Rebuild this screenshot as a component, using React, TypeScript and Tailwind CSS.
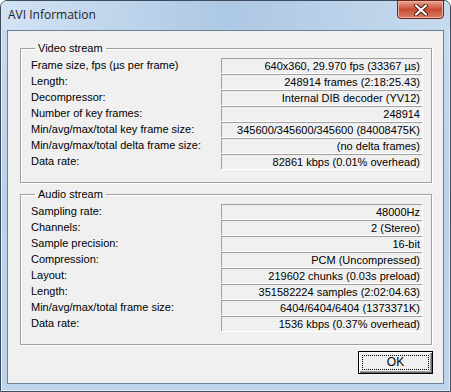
/**
 * AVI Information dialog — classic Win32 property box inside an Aero frame.
 */
const videoRows: [string, string][] = [
  ["Frame size, fps (µs per frame)", "640x360, 29.970 fps (33367 µs)"],
  ["Length:", "248914 frames (2:18:25.43)"],
  ["Decompressor:", "Internal DIB decoder (YV12)"],
  ["Number of key frames:", "248914"],
  ["Min/avg/max/total key frame size:", "345600/345600/345600 (84008475K)"],
  ["Min/avg/max/total delta frame size:", "(no delta frames)"],
  ["Data rate:", "82861 kbps (0.01% overhead)"],
];

const audioRows: [string, string][] = [
  ["Sampling rate:", "48000Hz"],
  ["Channels:", "2 (Stereo)"],
  ["Sample precision:", "16-bit"],
  ["Compression:", "PCM (Uncompressed)"],
  ["Layout:", "219602 chunks (0.03s preload)"],
  ["Length:", "351582224 samples (2:02:04.63)"],
  ["Min/avg/max/total frame size:", "6404/6404/6404 (1373371K)"],
  ["Data rate:", "1536 kbps (0.37% overhead)"],
];

function InfoGroup({ title, rows }: { title: string; rows: [string, string][] }) {
  return (
    <fieldset className="border border-[#a0a0a0] shadow-[inset_1px_1px_0_#ffffff,1px_1px_0_#ffffff] pl-[10px] pr-[9px] pb-[13px] pt-[3px]">
      <legend className="ml-[4px] px-[3px] leading-[14px]">{title}</legend>
      <div className="flex flex-col gap-px">
        {rows.map(([label, value], i) => (
          <div key={i} className="flex items-center h-[15px]">
            <span className="w-[190px] whitespace-nowrap leading-[15px]">{label}</span>
            <span className="ml-auto w-[201px] h-[15px] border-t border-l border-[#a0a0a0] shadow-[1px_1px_0_#ffffff] text-right pr-[2px] leading-[14px] whitespace-nowrap">
              {value}
            </span>
          </div>
        ))}
      </div>
    </fieldset>
  );
}

export default function App() {
  return (
    <div className="w-[451px] h-[392px] bg-white">
      <div className="w-full h-full flex flex-col rounded-t-[7px] border border-[#3d4b5c] bg-gradient-to-b from-[#c9dcf0] via-[#b9d1ea] to-[#bdd4ec] shadow-[inset_1px_1px_0_#e6f0fa,inset_-1px_-1px_0_#e6f0fa]">
        {/* Title bar */}
        <div className="h-[29px] flex items-start relative bg-gradient-to-r from-[#d2e3f4] via-[#adc8e4] to-[#c6daee] rounded-t-[6px]">
          <span className="mt-[6px] ml-[7px] text-[12px] leading-[16px] text-[#1e1e1e] font-['Open_Sans','Liberation_Sans',sans-serif]">
            AVI Information
          </span>
          <div className="ml-auto mr-[6px] -mt-px w-[47px] h-[19px] rounded-b-[4px] border border-[#6e2419] bg-gradient-to-b from-[#e8a493] via-[#c94a33] to-[#d8806a] shadow-[inset_0_0_0_1px_#e9b2a3] flex items-center justify-center">
            <svg width="14" height="12" viewBox="0 0 14 12">
              <path d="M2 1.5 L12 10.5 M12 1.5 L2 10.5" stroke="#4a1a12" strokeWidth="4" strokeLinecap="round" />
              <path d="M2 1.5 L12 10.5 M12 1.5 L2 10.5" stroke="#ffffff" strokeWidth="2.2" strokeLinecap="round" />
            </svg>
          </div>
        </div>

        {/* Client area */}
        <div className="flex-1 px-[6px] pb-[7px]">
          <div className="h-full border border-[#6d8196] bg-[#f0f0f0] text-black text-[11px] font-['Liberation_Sans',Arial,sans-serif] pt-[10px] pl-[12px] pr-[11px] pb-[9px] flex flex-col">
            <InfoGroup title="Video stream" rows={videoRows} />
            <div className="h-[4px]" />
            <InfoGroup title="Audio stream" rows={audioRows} />

            <div className="mt-auto flex justify-end">
              <button className="w-[75px] h-[23px] border border-black bg-[#f0f0f0] shadow-[inset_1px_1px_0_#ffffff,inset_-1px_-1px_0_#696969,inset_-2px_-2px_0_#a0a0a0] p-[3px] mr-[-1px]">
                <div className="w-full h-full border border-dotted border-black flex items-center justify-center leading-[13px] text-[12px]">
                  OK
                </div>
              </button>
            </div>
          </div>
        </div>
      </div>
    </div>
  );
}
